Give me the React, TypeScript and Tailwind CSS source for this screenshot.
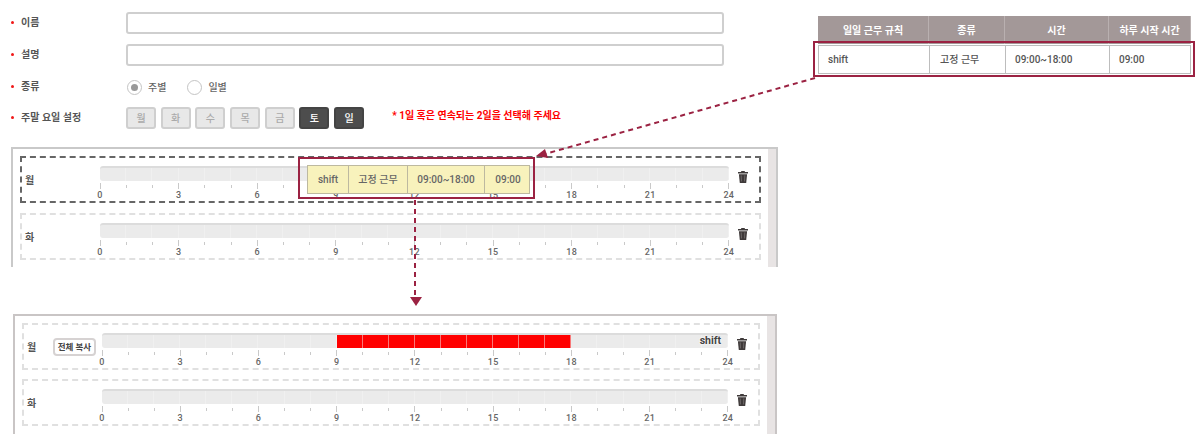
import React from "react";

const WEEKDAYS = ["월", "화", "수", "목", "금", "토", "일"];
const HOURS = Array.from({ length: 25 }, (_, i) => i);

const TrashIcon = () => (
  <svg width="10" height="12" viewBox="0 0 10 12" className="block">
    <path d="M3.4 0h3.2l.4 1.1H10v1.4H0V1.1h3z" fill="#3f3a3a" />
    <path d="M.9 3.3h8.2L8.2 12H1.8z" fill="#3f3a3a" />
    <path d="M3.2 4.4l.3 6M6.8 4.4l-.3 6" stroke="#8a8585" strokeWidth=".6" />
  </svg>
);

const Timeline = ({ filled, tag, narrow }: { filled?: boolean; tag?: string; narrow?: boolean }) => (
  <div className={`shrink-0 ${narrow ? "w-[626px]" : "w-[629px]"}`}>
    <div className="relative flex h-[15px] overflow-hidden rounded-[3px] border-t-2 border-[#dcdcdc] bg-[#ebebeb]">
      {Array.from({ length: 24 }, (_, i) => (
        <div
          key={i}
          className={`flex-1 border-r ${
            filled && i >= 9 && i < 18
              ? "-mt-[2px] border-[#f87878] bg-[#ff0000]"
              : "border-[#f0f0f0]"
          }`}
        />
      ))}
      {tag && (
        <span className="absolute right-[7px] -top-[1px] text-[10.5px] leading-[14px] font-bold text-[#444] [text-shadow:0_0_2px_#fff,0_0_2px_#fff]">
          {tag}
        </span>
      )}
    </div>
    <div className="mt-[2px] flex h-[6px] justify-between">
      {HOURS.map((h) => (
        <div key={h} className="flex w-0 justify-center">
          <div
            className={
              h % 3 === 0
                ? "h-[6px] w-px shrink-0 bg-[#c9c9c9]"
                : "mt-[2px] h-[3px] w-px shrink-0 bg-[#c9c9c9]"
            }
          />
        </div>
      ))}
    </div>
    <div className="flex h-[12px] justify-between">
      {HOURS.map((h) => (
        <div key={h} className="flex w-0 justify-center">
          {h % 3 === 0 && (
            <span className="text-[9px] leading-[12px] font-medium tracking-[0.3px] text-[#666]">
              {h}
            </span>
          )}
        </div>
      ))}
    </div>
  </div>
);

interface DayRowProps {
  day: string;
  active?: boolean;
  filled?: boolean;
  tag?: string;
  copyButton?: boolean;
  narrow?: boolean;
}

const DayRow = ({ day, active, filled, tag, copyButton, narrow }: DayRowProps) => (
  <div
    className={`flex h-[47px] pt-[8px] ${narrow ? "w-[738px]" : "w-[741px]"} border-2 border-dashed ${
      active ? "border-[#666]" : "border-[#e0e0e0]"
    }`}
  >
    <div className="flex h-[28px] w-[78px] shrink-0 items-center justify-between pr-[6px] pl-[3px]">
      <span className="text-[10px] font-bold text-[#555]">{day}</span>
      {copyButton && (
        <button className="h-[18px] w-[43px] rounded-[4px] border-2 border-[#d6d2d2] bg-white text-[8.5px] leading-[14px] font-bold text-[#444]">
          전체 복사
        </button>
      )}
    </div>
    <Timeline filled={filled} tag={tag} narrow={narrow} />
    <div className="ml-[9px] pt-[5px]">
      <TrashIcon />
    </div>
  </div>
);

const FormLabel = ({ text }: { text: string }) => (
  <div className="flex w-[116px] shrink-0 items-center pb-[2px] pl-px">
    <span className="mr-[7px] h-[3px] w-[3px] rounded-full bg-[#f01818]" />
    <span className="text-[10px] font-bold text-[#555]">{text}</span>
  </div>
);

const Radio = ({ label, checked }: { label: string; checked?: boolean }) => (
  <div className="flex items-center">
    <span className="flex h-[15px] w-[15px] items-center justify-center rounded-full border border-[#c4c4c4] bg-white">
      {checked && <span className="h-[7px] w-[7px] rounded-full bg-[#999]" />}
    </span>
    <span className="ml-[6px] text-[10px] font-medium text-[#666]">{label}</span>
  </div>
);

const App: React.FC = () => {
  return (
    <div className='relative flex h-[434px] w-[1200px] overflow-hidden bg-white font-["Roboto","Noto_Sans_CJK_KR",sans-serif]'>
      <div className="w-[778px] shrink-0">
        <div className="flex flex-col gap-[10px] pt-[12px] pl-[10px]">
          <div className="flex h-[22px]">
            <FormLabel text="이름" />
            <div className="h-[22px] w-[598px] rounded-[3px] border-2 border-[#cfcfcf] bg-white" />
          </div>
          <div className="flex h-[22px]">
            <FormLabel text="설명" />
            <div className="h-[22px] w-[598px] rounded-[3px] border-2 border-[#cfcfcf] bg-white" />
          </div>
          <div className="flex h-[22px]">
            <FormLabel text="종류" />
            <div className="flex items-center gap-[21px] pl-px">
              <Radio label="주별" checked />
              <Radio label="일별" />
            </div>
          </div>
          <div className="-mt-[1px] flex h-[22px]">
            <FormLabel text="주말 요일 설정" />
            <div className="flex gap-[4.7px]">
              {WEEKDAYS.map((d, i) => (
                <button
                  key={d}
                  className={`h-[22px] w-[30px] rounded-[3px] border-2 text-[10px] font-medium ${
                    i >= 5
                      ? "border-[#444] bg-[#4d4d4d] text-white"
                      : "border-[#cfcfcf] bg-[#e8e8e8] text-[#aaa]"
                  }`}
                >
                  {d}
                </button>
              ))}
            </div>
            <span className="ml-[28px] text-[10px] leading-[18px] font-bold text-[#ff0000]">
              * 1일 혹은 연속되는 2일을 선택해 주세요
            </span>
          </div>
        </div>

        <div className="mt-[18px] ml-[11px] flex h-[120px] w-[767px] justify-between border-x-2 border-t-2 border-[#c9c9c9]">
          <div className="flex flex-col gap-[10px] pt-[7px] pl-[7px]">
            <DayRow day="월" active />
            <DayRow day="화" />
          </div>
          <div className="w-[8px] bg-[#e8e4e4]" />
        </div>

        <div className="mt-[47px] ml-[13px] flex h-[120px] w-[764px] justify-between border-x-2 border-t-2 border-[#c9c5c5]">
          <div className="flex flex-col gap-[9px] pt-[7px] pl-[7px]">
            <DayRow day="월" filled tag="shift" copyButton narrow />
            <DayRow day="화" narrow />
          </div>
          <div className="w-[8px] bg-[#e8e4e4]" />
        </div>
      </div>

      <div className="relative mt-[16px] ml-[40px] h-fit w-[373px]">
        <div className="grid grid-cols-[111px_76px_104px_82px] text-center text-[10px] font-bold text-white">
          {["일일 근무 규칙", "종류", "시간", "하루 시작 시간"].map((h) => (
            <div
              key={h}
              className="flex h-[28px] items-center justify-center border-r border-[#b9b0b0] bg-[#a39898]"
            >
              {h}
            </div>
          ))}
        </div>
        <div className="mt-px grid h-[29px] grid-cols-[111px_76px_104px_82px] items-center border border-[#bdbdbd] text-[10px] font-medium text-[#555]">
          <div className="flex h-full items-center border-r border-[#bdbdbd] pl-[9px]">shift</div>
          <div className="flex h-full items-center border-r border-[#bdbdbd] pl-[10px]">고정 근무</div>
          <div className="flex h-full items-center border-r border-[#bdbdbd] pl-[9px]">09:00~18:00</div>
          <div className="flex h-full items-center pl-[9px]">09:00</div>
        </div>
        <div className="absolute -top-[1px] -left-[5px] mt-[26px] h-[36px] w-[382px] border-2 border-[#9b2242]" />
      </div>

      {/* tooltip dragged over the first timeline */}
      <div className="absolute top-[157px] left-[298px] h-[42px] w-[237px] border-2 border-[#9b2242] pt-[6px] pl-[7px]">
        <div className="grid h-[29px] w-[223px] grid-cols-[41px_59px_77px_46px] border border-[#bdb9a0] bg-[#f8f2bc] text-center text-[10px] leading-[27px] font-medium text-[#666]">
          <div className="border-r border-[#bdb9a0]">shift</div>
          <div className="border-r border-[#bdb9a0]">고정 근무</div>
          <div className="border-r border-[#bdb9a0]">09:00~18:00</div>
          <div>09:00</div>
        </div>
      </div>

      {/* annotation arrows */}
      <svg className="absolute inset-0" width="1200" height="434" fill="none">
        <path d="M815 78L545 154" stroke="#9b2242" strokeWidth="2" strokeDasharray="5 4" />
        <path d="M536 156l9-7 3 9z" fill="#9b2242" />
        <path d="M415 200V296" stroke="#9b2242" strokeWidth="2" strokeDasharray="5 4" />
        <path d="M410 297h12l-6 9z" fill="#9b2242" />
      </svg>
    </div>
  );
};

export default App;
